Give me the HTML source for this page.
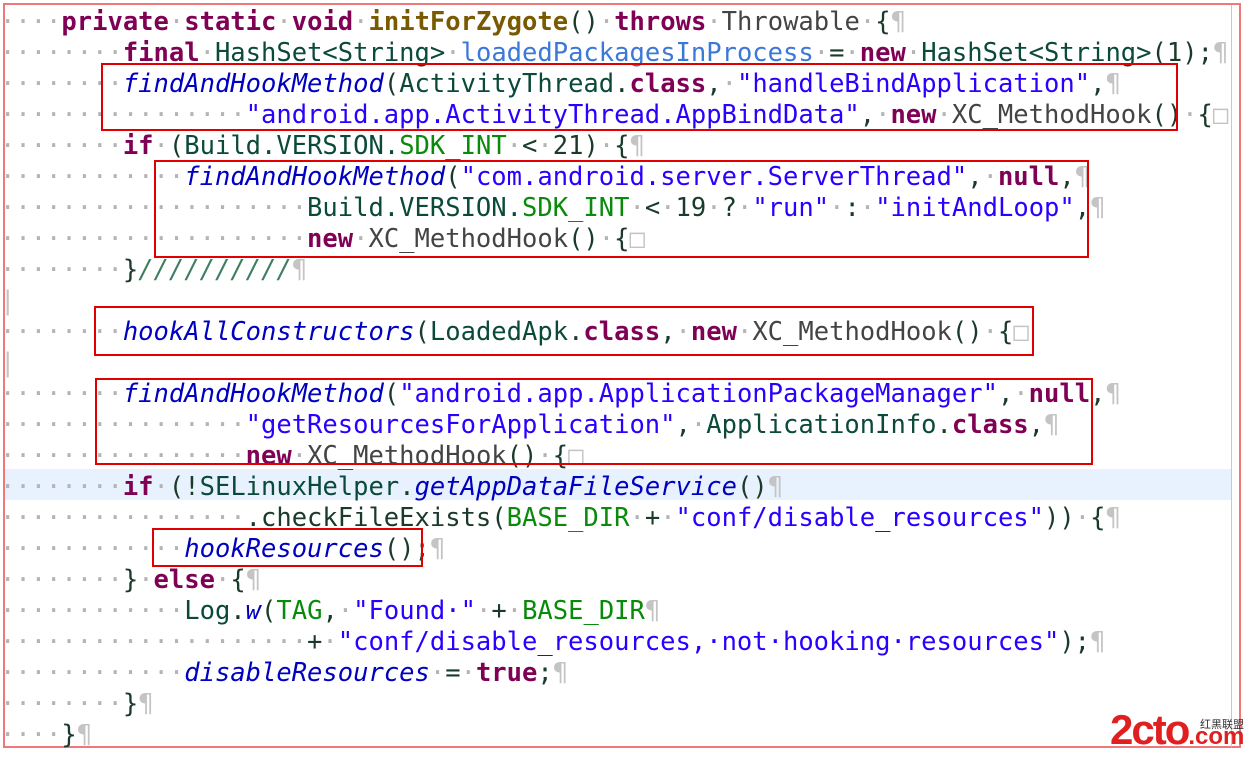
<!DOCTYPE html>
<html><head><meta charset="utf-8"><style>
body{margin:0;width:1248px;height:756px;background:#fff;overflow:hidden;position:relative;font-family:"DejaVu Sans Mono","Liberation Mono",monospace;}
.frame{position:absolute;left:3px;top:3px;width:1238px;height:745px;border:2px solid #f07878;box-sizing:border-box;}
.vl{position:absolute;left:1231px;top:5px;width:1px;height:742px;background:#c8c8c8;}
.hl{position:absolute;left:5px;top:469px;width:1226px;height:31px;background:#e8f2fe;}
.code{position:absolute;left:0;top:7px;font-size:25.5px;line-height:31px;white-space:pre;color:#1a3a2a;}
.d{color:#b4b4b4}.p{color:#c4c4c4}
.k{color:#7f0055;font-weight:bold}
.s{color:#2a00ff}
.m{color:#0000c0;font-style:italic}
.f{color:#3c78d8}
.g{color:#0a8a0a}
.t{color:#0b4a3a}
.x{color:#444}
.c{color:#3f7f5f;font-style:italic}
.mn{color:#7a5a00;font-weight:bold}
.box{position:absolute;border:2px solid #e00000;box-sizing:border-box;}
.logo{position:absolute;left:1110px;top:710px;font-family:"Liberation Sans",sans-serif;color:#e02020;font-weight:bold;font-size:42px;letter-spacing:-2px;line-height:40px;}
.logo small{font-size:24px;letter-spacing:0}
.cn{position:absolute;left:1200px;top:716px;font-size:11px;color:#333;font-family:"Noto Sans CJK SC",sans-serif;}
</style></head><body>
<div class="frame"></div><div class="vl"></div><div class="hl"></div>
<div class="code"><span class="d">····</span><span class="k">private</span><span class="d">·</span><span class="k">static</span><span class="d">·</span><span class="k">void</span><span class="d">·</span><span class="mn">initForZygote</span>()<span class="d">·</span><span class="k">throws</span><span class="d">·</span><span class="x">Throwable</span><span class="d">·</span>{<span class="p">¶</span>
<span class="d">········</span><span class="k">final</span><span class="d">·</span><span class="t">HashSet&lt;String&gt;</span><span class="d">·</span><span class="f">loadedPackagesInProcess</span><span class="d">·</span>=<span class="d">·</span><span class="k">new</span><span class="d">·</span><span class="t">HashSet&lt;String&gt;</span>(1);<span class="p">¶</span>
<span class="d">········</span><span class="m">findAndHookMethod</span>(<span class="t">ActivityThread</span>.<span class="k">class</span>,<span class="d">·</span><span class="s">"handleBindApplication"</span>,<span class="p">¶</span>
<span class="d">················</span><span class="s">"android.app.ActivityThread.AppBindData"</span>,<span class="d">·</span><span class="k">new</span><span class="d">·</span><span class="x">XC_MethodHook</span>()<span class="d">·</span>{<span class="p">□</span>
<span class="d">········</span><span class="k">if</span><span class="d">·</span>(<span class="t">Build.VERSION.</span><span class="g">SDK_INT</span><span class="d">·</span>&lt;<span class="d">·</span>21)<span class="d">·</span>{<span class="p">¶</span>
<span class="d">············</span><span class="m">findAndHookMethod</span>(<span class="s">"com.android.server.ServerThread"</span>,<span class="d">·</span><span class="k">null</span>,<span class="p">¶</span>
<span class="d">····················</span><span class="t">Build.VERSION.</span><span class="g">SDK_INT</span><span class="d">·</span>&lt;<span class="d">·</span>19<span class="d">·</span>?<span class="d">·</span><span class="s">"run"</span><span class="d">·</span>:<span class="d">·</span><span class="s">"initAndLoop"</span>,<span class="p">¶</span>
<span class="d">····················</span><span class="k">new</span><span class="d">·</span><span class="x">XC_MethodHook</span>()<span class="d">·</span>{<span class="p">□</span>
<span class="d">········</span>}<span class="c">//////////</span><span class="p">¶</span>
<span class="p">|</span>
<span class="d">········</span><span class="m">hookAllConstructors</span>(<span class="t">LoadedApk</span>.<span class="k">class</span>,<span class="d">·</span><span class="k">new</span><span class="d">·</span><span class="x">XC_MethodHook</span>()<span class="d">·</span>{<span class="p">□</span>
<span class="p">|</span>
<span class="d">········</span><span class="m">findAndHookMethod</span>(<span class="s">"android.app.ApplicationPackageManager"</span>,<span class="d">·</span><span class="k">null</span>,<span class="p">¶</span>
<span class="d">················</span><span class="s">"getResourcesForApplication"</span>,<span class="d">·</span><span class="t">ApplicationInfo</span>.<span class="k">class</span>,<span class="p">¶</span>
<span class="d">················</span><span class="k">new</span><span class="d">·</span><span class="x">XC_MethodHook</span>()<span class="d">·</span>{<span class="p">□</span>
<span class="d">········</span><span class="k">if</span><span class="d">·</span>(!<span class="t">SELinuxHelper</span>.<span class="m">getAppDataFileService</span>()<span class="p">¶</span>
<span class="d">················</span>.checkFileExists(<span class="g">BASE_DIR</span><span class="d">·</span>+<span class="d">·</span><span class="s">"conf/disable_resources"</span>))<span class="d">·</span>{<span class="p">¶</span>
<span class="d">············</span><span class="m">hookResources</span>();<span class="p">¶</span>
<span class="d">········</span>}<span class="d">·</span><span class="k">else</span><span class="d">·</span>{<span class="p">¶</span>
<span class="d">············</span><span class="t">Log</span>.<span class="m">w</span>(<span class="g">TAG</span>,<span class="d">·</span><span class="s">"Found·"</span><span class="d">·</span>+<span class="d">·</span><span class="g">BASE_DIR</span><span class="p">¶</span>
<span class="d">····················</span>+<span class="d">·</span><span class="s">"conf/disable_resources,·not·hooking·resources"</span>);<span class="p">¶</span>
<span class="d">············</span><span class="m">disableResources</span><span class="d">·</span>=<span class="d">·</span><span class="k">true</span>;<span class="p">¶</span>
<span class="d">········</span>}<span class="p">¶</span>
<span class="d">····</span>}<span class="p">¶</span></div>
<div class="box" style="left:101px;top:63px;width:1077px;height:68px"></div>
<div class="box" style="left:154px;top:160px;width:935px;height:98px"></div>
<div class="box" style="left:94px;top:306px;width:940px;height:50px"></div>
<div class="box" style="left:95px;top:378px;width:998px;height:87px"></div>
<div class="box" style="left:152px;top:528px;width:271px;height:39px"></div>
<div class="logo">2cto<small>.com</small></div>
<div class="cn">红黑联盟</div>
</body></html>
